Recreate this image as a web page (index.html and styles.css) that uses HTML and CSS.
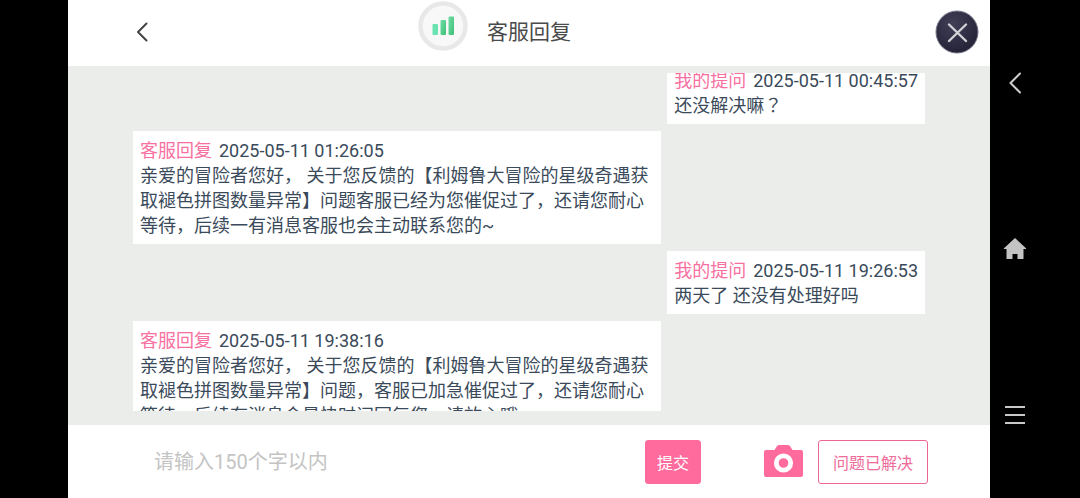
FILE: index.html
```html
<!DOCTYPE html>
<html lang="zh-CN">
<head>
<meta charset="utf-8">
<meta name="viewport" content="width=device-width, initial-scale=1">
<title>客服回复</title>
<link rel="stylesheet" href="styles.css">
</head>
<body>
<div class="stage">
  <header class="header">
    <button class="icon-button" type="button" aria-label="返回">
      <svg width="16" height="22" viewBox="0 0 16 22" fill="none" stroke="#444" stroke-width="2" stroke-linecap="round" stroke-linejoin="round"><path d="M12.5 2.5 4 11l8.500 8.500"/></svg>
    </button>
    <h1 class="title">客服回复
      <span class="signal">
        <svg width="50" height="50" viewBox="0 0 50 50">
          <defs><linearGradient id="bar" x1="0" y1="0" x2="1" y2="1"><stop offset="0" stop-color="#6fdca4"/><stop offset="1" stop-color="#3fbf78"/></linearGradient></defs>
          <circle cx="25" cy="25" r="22.500" fill="#f8f8f8" stroke="#e8e8e8" stroke-width="4.500"/>
          <rect x="14.500" y="23" width="5.500" height="11" rx="1" fill="#6be3b0"/>
          <rect x="22.500" y="19" width="5.500" height="15" rx="1" fill="url(#bar)"/>
          <rect x="30.500" y="15.500" width="5.500" height="18.500" rx="1" fill="url(#bar)"/>
        </svg>
      </span>
    </h1>
    <button class="icon-button close" type="button" aria-label="关闭">
      <svg width="44" height="44" viewBox="0 0 44 44">
        <defs><radialGradient id="disc" cx=".4" cy=".3" r=".75"><stop offset="0" stop-color="#413f57"/><stop offset="1" stop-color="#232135"/></radialGradient></defs>
        <circle cx="22" cy="22" r="21" fill="url(#disc)" stroke="#77768a"/>
        <path d="M14 14.500 31 31M31 14.500 14 31" stroke="#d2d2d6" stroke-width="2.400" stroke-linecap="round"/>
      </svg>
    </button>
  </header>

  <main class="chat">
    <div class="messages">
      <article class="message mine">
        <div><span class="sender">我的提问</span><time>2025-05-11 00:45:57</time></div>
        <p>还没解决嘛<span class="centered-mark" lang="zh-TW">？</span></p>
      </article>
      <article class="message">
        <div><span class="sender">客服回复</span><time>2025-05-11 01:26:05</time></div>
        <p>亲爱的冒险者您好， 关于您反馈的【利姆鲁大冒险的星级奇遇获取褪色拼图数量异常】问题客服已经为您催促过了，还请您耐心等待，后续一有消息客服也会主动联系您的~</p>
      </article>
      <article class="message mine">
        <div><span class="sender">我的提问</span><time>2025-05-11 19:26:53</time></div>
        <p>两天了 还没有处理好吗</p>
      </article>
      <article class="message">
        <div><span class="sender">客服回复</span><time>2025-05-11 19:38:16</time></div>
        <p>亲爱的冒险者您好， 关于您反馈的【利姆鲁大冒险的星级奇遇获取褪色拼图数量异常】问题，客服已加急催促过了，还请您耐心等待，后续有消息会最快时间回复您，请放心哦</p>
      </article>
    </div>
  </main>

  <form class="composer">
    <input class="field" type="text" maxlength="150" placeholder="请输入150个字以内" aria-label="提问内容">
    <button class="submit" type="button">提交</button>
    <button class="icon-button camera" type="button" aria-label="上传图片">
      <svg width="39" height="34" viewBox="0 0 39 34">
        <path fill="#ff6b9d" d="M2 5h8.500l2.500-4q1-1 2.200-1h8.600q1.200 0 2.200 1l2.500 4H37q2 0 2 2v23q0 2-2 2H2q-2 0-2-2V7q0-2 2-2z"/>
        <circle cx="19.500" cy="18" r="7.200" fill="#ff6b9d" stroke="#fff" stroke-width="4.800"/>
      </svg>
    </button>
    <button class="resolved" type="button">问题已解决</button>
  </form>
</div>

<nav class="system" aria-label="系统导航">
  <button class="icon-button" type="button" aria-label="后退">
    <svg width="24" height="24" viewBox="0 0 24 24" fill="none" stroke="#ccc" stroke-width="2" stroke-linecap="round" stroke-linejoin="round"><path d="M17 2.500 7.500 12l9.500 9.500"/></svg>
  </button>
  <button class="icon-button" type="button" aria-label="主屏幕">
    <svg width="24" height="24" viewBox="0 0 24 24" fill="#c4c4c4"><path d="M12 1 1 11.200q-.5.800.400.800H3.500v9.500q0 .500.500.500h5.500v-5h5v5h5.500q.500 0 .500-.500V12h2.100q.900 0 .400-.800z"/></svg>
  </button>
  <button class="icon-button" type="button" aria-label="菜单">
    <svg width="24" height="24" viewBox="0 0 24 24" stroke="#c8c8c8" stroke-width="2"><path d="M2 4h20M2 12h20M2 20h20"/></svg>
  </button>
</nav>
</body>
</html>
```

FILE: styles.css
```css
* {
  box-sizing: border-box;
}

body {
  margin: 0;
  height: 100vh;
  padding-left: 68px;
  display: flex;
  background: #000;
  color: #3a4a5a;
  font: 18px/25px Roboto, "Noto Sans CJK SC", sans-serif;
}

button,
input {
  font-family: inherit;
}

.stage {
  flex: 1;
  min-width: 0;
  display: flex;
  flex-direction: column;
  background: #fff;
}

.header {
  display: grid;
  grid-template-columns: 1fr auto 1fr;
  align-items: center;
  height: 66px;
  padding: 0 11px 2px 66px;
}

.icon-button {
  display: block;
  justify-self: start;
  padding: 0;
  border: 0;
  background: none;
  line-height: 0;
}

.close {
  justify-self: end;
}

.title {
  position: relative;
  margin: 0 55px 0 0;
  color: #4a4a4a;
  font-size: 21px;
  font-weight: 400;
  line-height: 30px;
}

.signal {
  position: absolute;
  right: 100%;
  bottom: -4px;
  margin-right: 19px;
  line-height: 0;
}

.chat {
  flex: 1;
  min-height: 0;
  display: flex;
  padding: 7px 65px 14px;
  background: #ebedeb;
}

.messages {
  flex: 1;
  display: flex;
  flex-direction: column;
  gap: 7px;
  overflow-y: auto;
  scrollbar-width: none;
}

.message {
  flex: none;
  align-self: flex-start;
  max-width: calc(200% / 3);
  padding: 7px 7px 6px;
  background: #fff;
}

.message:first-child {
  margin-top: -12px;
}

.mine {
  align-self: flex-end;
}

.message p {
  margin: 0;
}

.sender {
  margin-right: 7px;
  color: #f8709f;
}

.centered-mark {
  font-family: "Noto Sans CJK TC", sans-serif;
  line-height: 1;
}

.composer {
  display: flex;
  align-items: center;
  height: 73px;
  padding: 0 62px 0 65px;
}

.field {
  flex: 1;
  min-width: 0;
  height: 44px;
  margin-right: 20px;
  padding: 0 21px;
  border: 0;
  outline: 0;
  background: none;
  color: #3a4a5a;
  font-size: 20px;
}

.field::placeholder {
  color: #c4c4c4;
}

.submit,
.resolved {
  height: 44px;
  border: 1px solid #ff6b9d;
  border-radius: 3px;
  font-size: 16px;
  white-space: nowrap;
}

.submit {
  padding: 0 11px;
  background: #ff6b9d;
  color: #fff;
}

.resolved {
  padding: 0 14px;
  background: #fff;
  border-color: #ee6696;
  color: #ee6c9a;
}

.camera {
  margin: 0 15px 0 63px;
}

.system {
  width: 90px;
  display: flex;
  flex-direction: column;
  align-items: flex-start;
  justify-content: space-around;
  padding-left: 13px;
}
```
